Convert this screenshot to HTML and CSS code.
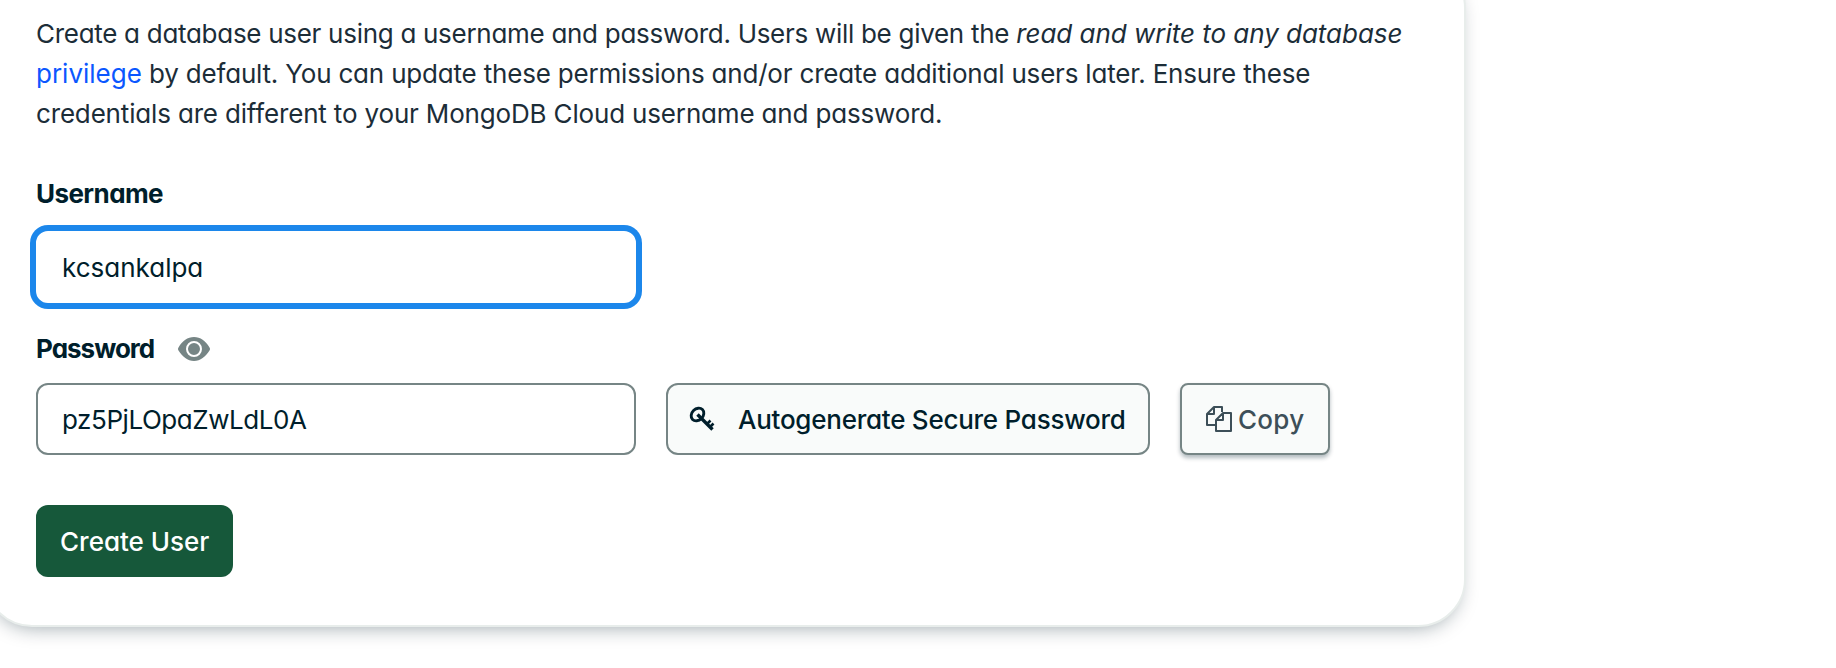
FILE: index.html
```html
<!DOCTYPE html>
<html lang="en">
<head>
<meta charset="utf-8">
<title>Create a database user</title>
<link rel="stylesheet" href="styles.css">
</head>
<body>
<main class="card">
  <p class="intro">
    <span class="line line-1">Create a database user using a username and password. Users will be given the <em>read and write to any database</em></span>
    <span class="line line-2"><a class="link">privilege</a> by default. You can update these permissions and/or create additional users later. Ensure these</span>
    <span class="line line-3">credentials are different to your MongoDB Cloud username and password.</span>
  </p>
  <label class="label label-username" for="username">Username</label>
  <input class="input input-focused" id="username" type="text" value="kcsankalpa">
  <div class="label-row">
    <label class="label label-password" for="password">Password</label>
    <svg class="eye" viewBox="0 0 32 24" width="32" height="24">
      <path d="M.5 13.600Q-.5 12 .5 10.400C4.500 4 9.500 0 16 0S27.500 4 31.500 10.400Q32.500 12 31.500 13.600C27.500 20 22.500 24 16 24S4.500 20 .5 13.600Z" fill="#768585"/>
      <circle cx="16" cy="12" r="7" fill="#768585" stroke="#fff" stroke-width="2"/>
    </svg>
  </div>
  <div class="password-row">
    <input class="input input-password" id="password" type="text" value="pz5PjLOpaZwLdL0A">
    <button class="button autogenerate">
      <svg class="key" viewBox="0 0 26 26" width="26" height="26" fill="none" stroke="#001e2b">
        <ellipse cx="8.500" cy="8.500" rx="7" ry="5.600" transform="rotate(-45 8.500 8.500)" stroke-width="2.900"/>
        <path d="M8.500 8.500L23.500 23.500" stroke-width="3.400"/>
        <path d="M18.500 17.500l3-3M21.500 20.500l3-3" stroke-width="2.600"/>
      </svg>
      <span class="autogenerate-text">Autogenerate Secure Password</span>
    </button>
    <button class="button copy">
      <svg class="copy-icon" viewBox="0 0 28 28" width="28" height="28" fill="none" stroke="#3d4f58" stroke-width="2" stroke-linejoin="round">
        <path d="M10 20H2V9l7-7h8v5M2 9h7V2"/>
        <path d="M11 15l7-7h8v18H11ZM11 15h7V8"/>
      </svg>
      <span class="copy-text">Copy</span>
    </button>
  </div>
  <button class="button create"><span class="create-text">Create User</span></button>
</main>
</body>
</html>
```
FILE: styles.css
```css
* { box-sizing: border-box; }

html, body { height: 100%; }

body {
  margin: 0;
  overflow: hidden;
  background: #fff;
  color: #1c2d38;
  font-family: Inter, "Liberation Sans", sans-serif;
  font-feature-settings: "cv11" 1;
  font-size: 26px;
  line-height: 40px;
}

.card {
  display: flex;
  flex-direction: column;
  align-items: flex-start;
  width: 1482px;
  height: 667px;
  margin: -40px 0 0 -16px;
  padding: 52px 50px 0;
  border: 2px solid #e8edeb;
  border-radius: 48px;
  background: #fff;
  box-shadow: 0 8px 20px -8px rgba(0, 30, 43, 0.4);
}

.intro { margin: 0; }

.line {
  display: block;
  white-space: nowrap;
}

.line-1 { letter-spacing: -0.29px; }

.line-1 em { letter-spacing: -0.03px; }

.line-2 { letter-spacing: -0.19px; }

.line-3 { letter-spacing: -0.165px; }

.link {
  color: #0b57ff;
  letter-spacing: 0;
}

.label {
  color: #001e2b;
  font-weight: 700;
}

.label-username {
  margin-top: 40px;
  letter-spacing: -0.58px;
}

.label-password { letter-spacing: -1px; }

.input {
  width: 600px;
  height: 72px;
  padding: 0 24px;
  border: 2px solid #768585;
  border-radius: 12px;
  outline: none;
  background: #fff;
  color: #001e2b;
  font: inherit;
  font-feature-settings: inherit;
}

.input-focused {
  margin-top: 17px;
  border-color: #fff;
  box-shadow: 0 0 0 6px #1c87eb;
}

.input-password { letter-spacing: -0.44px; }

.label-row {
  display: flex;
  align-items: center;
  gap: 24px;
  margin-top: 26px;
}

.password-row {
  display: flex;
  gap: 30px;
  margin-top: 14px;
}

.button {
  display: flex;
  align-items: center;
  height: 72px;
  padding: 0;
  border: 2px solid #768585;
  border-radius: 12px;
  background: #f9fbfa;
  color: #001e2b;
  font: inherit;
  font-feature-settings: inherit;
  font-weight: 500;
  white-space: nowrap;
}

.autogenerate {
  width: 484px;
  padding-left: 21px;
  gap: 23px;
}

.autogenerate-text { letter-spacing: -0.25px; }

.copy {
  width: 150px;
  padding-left: 23px;
  gap: 5px;
  border-radius: 8px;
  color: #3d4f58;
  box-shadow: 0 3px 4px rgba(0, 30, 43, 0.3);
}

.copy-text { letter-spacing: 0.3px; }

.create {
  width: 197px;
  margin-top: 50px;
  padding-left: 24px;
  border: 0;
  background: #16583a;
  color: #fff;
}

.autogenerate-text, .copy-text, .create-text { padding-top: 1px; }
```
